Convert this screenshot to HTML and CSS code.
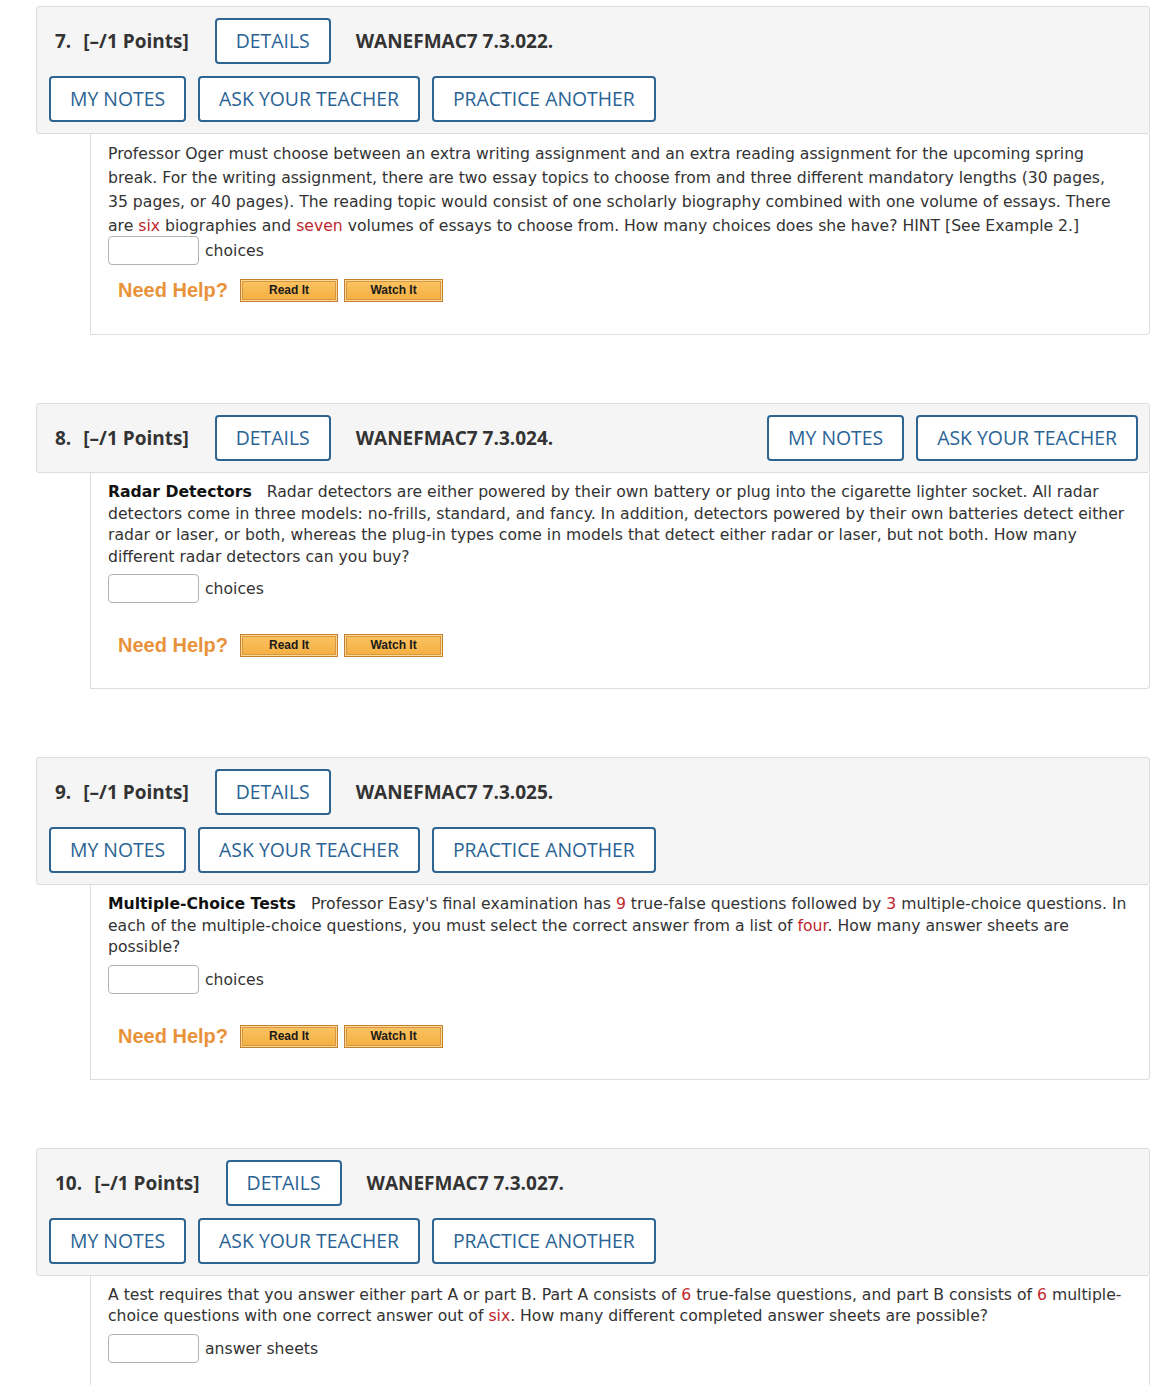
FILE: index.html
```html
<!DOCTYPE html>
<html>
<head>
<meta charset="utf-8">
<link rel="stylesheet" href="styles.css">
</head>
<body>
<div class="page">

  <section class="q">
    <div class="q-head">
      <div class="head-row">
        <span class="q-num">7.</span><span class="q-pts">[–/1 Points]</span>
        <span class="btn">DETAILS</span>
        <span class="q-code">WANEFMAC7 7.3.022.</span>
      </div>
      <div class="head-row head-actions">
        <span class="btn">MY NOTES</span>
        <span class="btn">ASK YOUR TEACHER</span>
        <span class="btn">PRACTICE ANOTHER</span>
      </div>
    </div>
    <div class="q-body q-body-tall">
      <p class="q-text">Professor Oger must choose between an extra writing assignment and an extra reading assignment for the upcoming spring break. For the writing assignment, there are two essay topics to choose from and three different mandatory lengths (30 pages, 35 pages, or 40 pages). The reading topic would consist of one scholarly biography combined with one volume of essays. There are <span class="red">six</span> biographies and <span class="red">seven</span> volumes of essays to choose from. How many choices does she have? HINT [See Example 2.]</p>
      <div class="answer"><span class="ans-box"></span><span class="ans-unit">choices</span></div>
      <div class="help help-near">
        <span class="help-label">Need Help?</span>
        <span class="help-btn">Read It</span>
        <span class="help-btn help-btn-wide">Watch It</span>
      </div>
    </div>
  </section>

  <section class="q">
    <div class="q-head q-head-single">
      <div class="head-row">
        <span class="q-num">8.</span><span class="q-pts">[–/1 Points]</span>
        <span class="btn">DETAILS</span>
        <span class="q-code">WANEFMAC7 7.3.024.</span>
        <span class="head-spacer"></span>
        <span class="btn">MY NOTES</span>
        <span class="btn">ASK YOUR TEACHER</span>
      </div>
    </div>
    <div class="q-body">
      <p class="q-text"><b class="q-title">Radar Detectors</b> Radar detectors are either powered by their own battery or plug into the cigarette lighter socket. All radar detectors come in three models: no-frills, standard, and fancy. In addition, detectors powered by their own batteries detect either radar or laser, or both, whereas the plug-in types come in models that detect either radar or laser, but not both. How many different radar detectors can you buy?</p>
      <div class="answer"><span class="ans-box"></span><span class="ans-unit">choices</span></div>
      <div class="help">
        <span class="help-label">Need Help?</span>
        <span class="help-btn">Read It</span>
        <span class="help-btn help-btn-wide">Watch It</span>
      </div>
    </div>
  </section>

  <section class="q">
    <div class="q-head">
      <div class="head-row">
        <span class="q-num">9.</span><span class="q-pts">[–/1 Points]</span>
        <span class="btn">DETAILS</span>
        <span class="q-code">WANEFMAC7 7.3.025.</span>
      </div>
      <div class="head-row head-actions">
        <span class="btn">MY NOTES</span>
        <span class="btn">ASK YOUR TEACHER</span>
        <span class="btn">PRACTICE ANOTHER</span>
      </div>
    </div>
    <div class="q-body">
      <p class="q-text"><b class="q-title">Multiple-Choice Tests</b> Professor Easy's final examination has <span class="red">9</span> true-false questions followed by <span class="red">3</span> multiple-choice questions. In each of the multiple-choice questions, you must select the correct answer from a list of <span class="red">four</span>. How many answer sheets are possible?</p>
      <div class="answer"><span class="ans-box"></span><span class="ans-unit">choices</span></div>
      <div class="help">
        <span class="help-label">Need Help?</span>
        <span class="help-btn">Read It</span>
        <span class="help-btn help-btn-wide">Watch It</span>
      </div>
    </div>
  </section>

  <section class="q">
    <div class="q-head">
      <div class="head-row">
        <span class="q-num">10.</span><span class="q-pts">[–/1 Points]</span>
        <span class="btn">DETAILS</span>
        <span class="q-code">WANEFMAC7 7.3.027.</span>
      </div>
      <div class="head-row head-actions">
        <span class="btn">MY NOTES</span>
        <span class="btn">ASK YOUR TEACHER</span>
        <span class="btn">PRACTICE ANOTHER</span>
      </div>
    </div>
    <div class="q-body">
      <p class="q-text">A test requires that you answer either part A or part B. Part A consists of <span class="red">6</span> true-false questions, and part B consists of <span class="red">6</span> multiple-choice questions with one correct answer out of <span class="red">six</span>. How many different completed answer sheets are possible?</p>
      <div class="answer"><span class="ans-box"></span><span class="ans-unit">answer sheets</span></div>
      <div class="help">
        <span class="help-label">Need Help?</span>
        <span class="help-btn">Read It</span>
        <span class="help-btn help-btn-wide">Watch It</span>
      </div>
    </div>
  </section>

</div>
</body>
</html>
```

FILE: styles.css
```css
html, body {
  margin: 0;
  padding: 0;
  background: #ffffff;
}

.page {
  width: 1114px;
  padding: 6px 0 0 36px;
  font-family: "DejaVu Sans", Verdana, sans-serif;
  color: #333333;
}

.q {
  margin-bottom: 68px;
}

.q-head {
  background: #f5f5f5;
  border: 1px solid #dddddd;
  border-radius: 3px;
  padding: 11px 11px 11px 12px;
  display: flex;
  flex-direction: column;
  gap: 12px;
  font-family: "Open Sans", "Liberation Sans", sans-serif;
}

.head-row {
  display: flex;
  align-items: center;
  gap: 12px;
}

.q-num {
  font-size: 19px;
  font-weight: 700;
  color: #333333;
  margin-left: 6px;
}

.q-pts {
  font-size: 19px;
  font-weight: 700;
  color: #333333;
  margin-right: 14px;
}

.q-code {
  font-size: 19px;
  font-weight: 700;
  color: #333333;
  margin-left: 13px;
}

.head-spacer {
  flex: 1;
}

.btn {
  display: inline-block;
  box-sizing: border-box;
  height: 46px;
  padding: 0 19px;
  border: 2px solid #2e6491;
  border-radius: 4px;
  background: #ffffff;
  color: #2a6394;
  font-size: 19.4px;
  font-weight: 500;
  line-height: 42px;
  white-space: nowrap;
}

.q-body {
  margin-left: 54px;
  border: 1px solid #dddddd;
  border-top: none;
  border-radius: 0 0 4px 0;
  padding: 8px 22px 31px 17px;
  font-size: 15.65px;
}

.q-body-tall {
  padding-top: 8px;
  padding-bottom: 32px;
}

.q-text {
  margin: 0;
  line-height: 21.5px;
}

.q-body-tall .q-text {
  line-height: 24px;
}

.q-title {
  color: #111111;
  margin-right: 10px;
}

.red {
  color: #c0272d;
}

.answer {
  display: flex;
  align-items: center;
  gap: 6px;
  margin-top: 7px;
}

.q-body-tall .answer {
  margin-top: -2px;
}

.ans-box {
  display: inline-block;
  box-sizing: border-box;
  width: 91px;
  height: 29px;
  border: 1px solid #b3b3b3;
  border-radius: 4px;
  background: #ffffff;
}

.ans-unit {
  color: #333333;
}

.help {
  display: flex;
  align-items: center;
  gap: 6px;
  margin-top: 31px;
  padding-left: 10px;
}

.help-near {
  margin-top: 14px;
}

.help-label {
  font-family: "Liberation Sans", Arial, sans-serif;
  font-weight: 700;
  font-size: 20px;
  color: #e8923a;
  margin-right: 6px;
}

.help-btn {
  display: inline-block;
  box-sizing: border-box;
  width: 98px;
  height: 23px;
  border: 1px solid #c4802f;
  background: linear-gradient(#fbc463, #f4ae40);
  box-shadow: inset 0 0 0 1px #fcd995, inset 0 0 0 2px #d99743;
  font-family: "Liberation Sans", Arial, sans-serif;
  font-weight: 700;
  font-size: 12px;
  line-height: 21px;
  text-align: center;
  color: #1a1a1a;
}

.help-btn-wide {
  width: 99px;
}
```
